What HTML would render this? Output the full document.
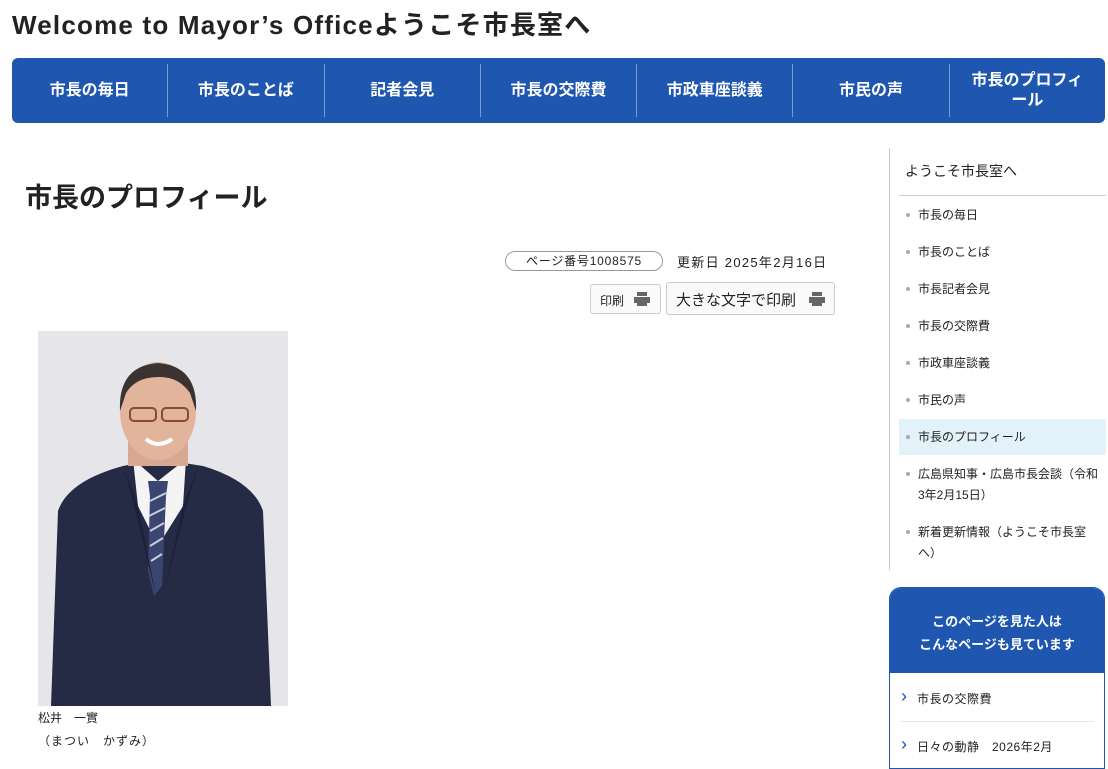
<!DOCTYPE html>
<html><head><meta charset="utf-8"><style>
body{margin:0;width:1108px;height:756px;overflow:hidden;background:#fff;font-family:"Liberation Sans","Noto Sans CJK JP",sans-serif;color:#222;position:relative}
.a{position:absolute}
h1{position:absolute;left:12px;top:5px;margin:0;font-size:26px;font-weight:bold;color:#222;letter-spacing:1.2px;white-space:nowrap}
.nav{left:12px;top:58px;width:1093px;height:65px;background:#1e56b0;border-radius:6px;display:flex}
.nav div{flex:1;color:#fff;font-weight:bold;font-size:16px;display:flex;align-items:center;justify-content:center;text-align:center;line-height:20px;border-left:1px solid #7a9bd3;margin:6px 0}
.nav div:first-child{border-left:none}
.side{left:889px;top:148px;width:216px;height:422px;border-left:1px solid #ccc}
.side .t{position:absolute;left:15px;top:13px;font-size:14px}
.side .ln{position:absolute;left:9px;right:0;top:47px;border-top:1px solid #ccc}
.it{position:absolute;left:28px;font-size:12px;line-height:21px;width:185px}
.it:before{content:"";position:absolute;left:-12px;top:8px;width:4px;height:4px;border-radius:50%;background:#aaa}
.box{left:889px;top:587px;width:214px;height:180px;border:1px solid #1e56b0;border-radius:12px 12px 0 0;overflow:hidden}
.box .hd{background:#1e56b0;color:#fff;font-weight:bold;font-size:13px;text-align:center;line-height:23px;padding-top:22px;height:63px}
.box .li{position:absolute;left:27px;font-size:12px;letter-spacing:.5px}
.box .li:before{content:"›";position:absolute;left:-16px;top:-4px;font-size:18px;color:#1e56b0}
.btn{border:1px solid #ccc;border-radius:3px;background:#fafafa}
</style></head><body>
<h1>Welcome to Mayor’s Officeようこそ市長室へ</h1>
<div class="a nav"><div>市長の毎日</div><div>市長のことば</div><div>記者会見</div><div>市長の交際費</div><div>市政車座談義</div><div>市民の声</div><div>市長のプロフィ<br>ール</div></div>
<div class="a" style="left:25px;top:176px;font-size:27px;font-weight:bold">市長のプロフィール</div>
<div class="a" style="left:505px;top:251px;width:156px;height:18px;border:1px solid #999;border-radius:10px;font-size:12px;text-align:center;line-height:18px;letter-spacing:.8px">ページ番号1008575</div>
<div class="a" style="left:677px;top:252px;font-size:13px;letter-spacing:1.3px">更新日 2025年2月16日</div>
<div class="a btn" style="left:590px;top:284px;width:69px;height:28px"><span class="a" style="left:9px;top:7px;font-size:12px">印刷</span>
<svg class="a" style="left:42px;top:6px" width="18" height="16"><rect x="4" y="1" width="10" height="4" fill="#666"/><rect x="1" y="6" width="16" height="6" fill="#666"/><rect x="4" y="11" width="10" height="4" fill="#666"/></svg></div>
<div class="a btn" style="left:666px;top:282px;width:167px;height:31px"><span class="a" style="left:9px;top:6px;font-size:15px">大きな文字で印刷</span>
<svg class="a" style="left:141px;top:8px" width="18" height="16"><rect x="4" y="1" width="10" height="4" fill="#666"/><rect x="1" y="6" width="16" height="6" fill="#666"/><rect x="4" y="11" width="10" height="4" fill="#666"/></svg></div>
<svg class="a" style="left:38px;top:331px" width="250" height="375">
<rect width="250" height="375" fill="#e6e6ea"/>
<path d="M13 375 L20 180 Q30 150 85 135 L120 128 L165 135 Q215 150 225 180 L233 375Z" fill="#262b45"/>
<path d="M95 128 L120 150 L148 128 L145 175 L120 215 L100 175Z" fill="#f4f4f4"/>
<path d="M110 150 L130 150 L128 165 L124 255 L116 265 L110 240 L112 165Z" fill="#3a4570"/>
<path d="M112 170 L128 162 M111 185 L127 177 M112 200 L126 192 M112 215 L125 207 M113 230 L124 223" stroke="#ccd" stroke-width="2"/>
<path d="M85 135 L100 175 L118 265 L95 170Z M160 135 L145 175 L125 265 L150 170Z" fill="#1c2038"/>
<rect x="90" y="105" width="60" height="30" fill="#d8a890"/>
<ellipse cx="120" cy="80" rx="38" ry="49" fill="#e2b49c"/>
<path d="M82 80 Q80 35 120 32 Q160 35 158 80 L152 62 Q140 45 120 46 Q98 46 88 62Z" fill="#3b3330"/>
<rect x="92" y="77" width="26" height="13" rx="4" fill="none" stroke="#8a4a30" stroke-width="2"/>
<rect x="124" y="77" width="26" height="13" rx="4" fill="none" stroke="#8a4a30" stroke-width="2"/>
<path d="M108 108 Q120 118 134 108" stroke="#fff" stroke-width="4" fill="none"/>
</svg>
<div class="a" style="left:38px;top:709px;font-size:12px">松井　一實</div>
<div class="a" style="left:38px;top:732px;font-size:12px;letter-spacing:1px">（まつい　かずみ）</div>
<div class="a side"><div class="t">ようこそ市長室へ</div><div class="ln"></div>
<div class="it" style="top:57px">市長の毎日</div>
<div class="it" style="top:94px">市長のことば</div>
<div class="it" style="top:131px">市長記者会見</div>
<div class="it" style="top:168px">市長の交際費</div>
<div class="it" style="top:205px">市政車座談義</div>
<div class="it" style="top:242px">市民の声</div>
<div class="a" style="left:9px;top:271px;width:207px;height:36px;background:#e3f1fb"></div>
<div class="it" style="top:279px">市長のプロフィール</div>
<div class="it" style="top:316px">広島県知事・広島市長会談（令和3年2月15日）</div>
<div class="it" style="top:374px">新着更新情報（ようこそ市長室へ）</div>
</div>
<div class="a box"><div class="hd">このページを見た人は<br>こんなページも見ています</div>
<div class="li" style="top:102px">市長の交際費</div>
<div class="a" style="left:10px;right:10px;top:133px;border-top:1px solid #e4e8f2"></div>
<div class="li" style="top:150px">日々の動静　2026年2月</div>
</div>
</body></html>
